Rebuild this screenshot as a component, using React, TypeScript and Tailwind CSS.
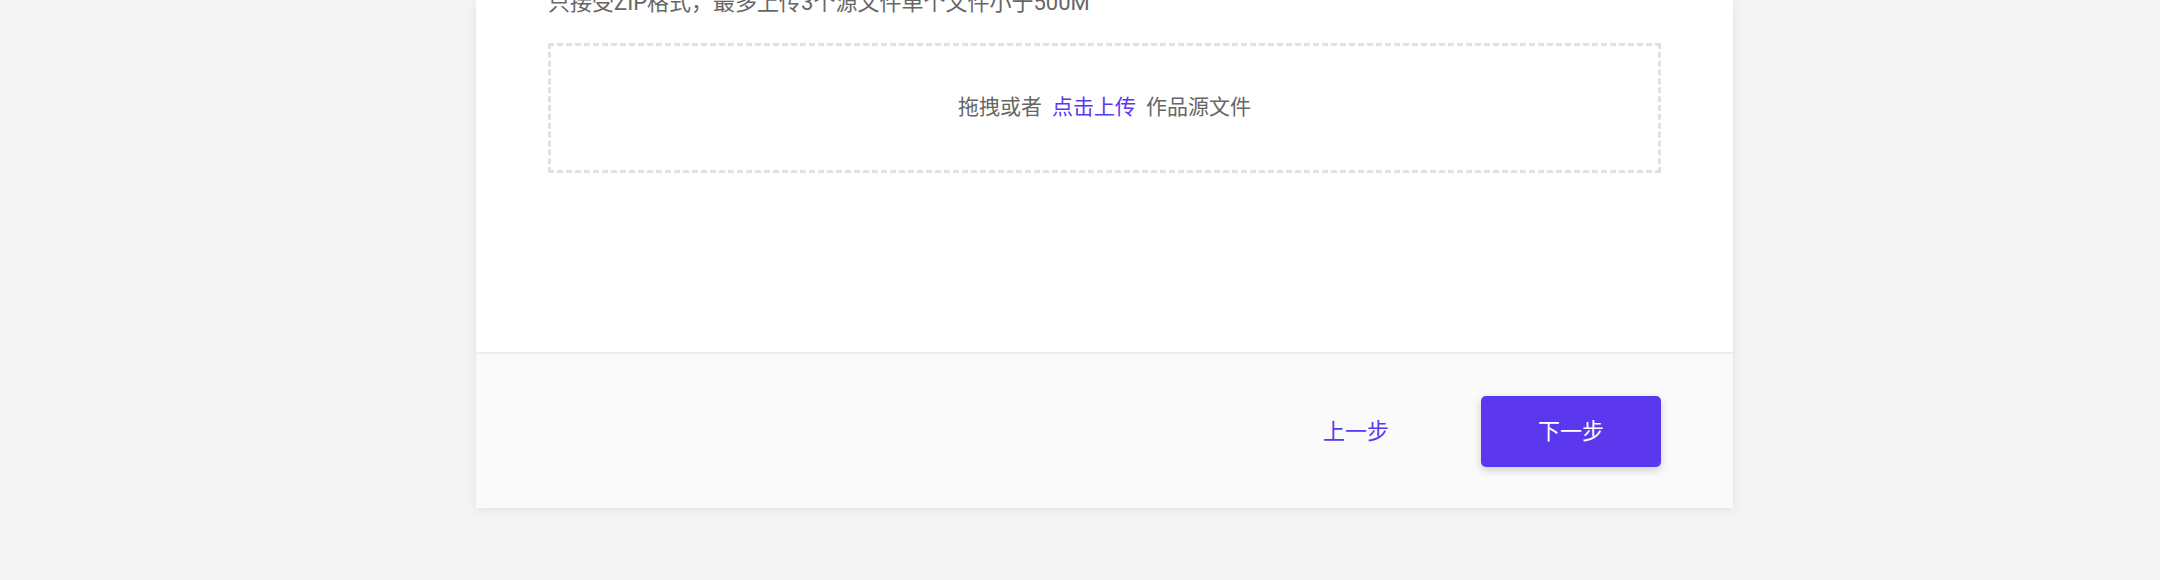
export default function App() {
    return (
        <div className="min-h-screen flex items-start bg-[#f4f4f4] font-['Roboto','Noto_Sans_CJK_SC',sans-serif]">
            <div className="ml-[476px] w-[1257px] bg-white shadow-[0_2px_10px_rgba(0,0,0,0.08)]">
                {/* Upload area */}
                <div className="px-[72px] pb-[179px]">
                    <p className="-mt-[12px] mb-[25px] text-[22px] leading-[30px] text-[#666666]">
                        只接受ZIP格式，最多上传3个源文件单个文件小于500M
                    </p>
                    <div className="h-[130px] border-[3px] border-dashed border-[#e1e1e1] flex items-center justify-center text-[21px] text-[#666666]">
                        <span>拖拽或者</span>
                        <span className="mx-[10px] text-[#5b37ee] cursor-pointer">点击上传</span>
                        <span>作品源文件</span>
                    </div>
                </div>

                {/* Footer */}
                <div className="h-[156px] border-t-2 border-[#eeeeee] bg-[#fafafa] flex items-center justify-end gap-[35px] pr-[72px]">
                    <button className="w-[180px] h-[71px] text-[22px] text-[#5b37ee]">上一步</button>
                    <button className="w-[180px] h-[71px] rounded-[5px] bg-[#5b37ee] text-[22px] text-white shadow-[0_3px_8px_rgba(0,0,0,0.18)]">
                        下一步
                    </button>
                </div>
            </div>
        </div>
    );
}
